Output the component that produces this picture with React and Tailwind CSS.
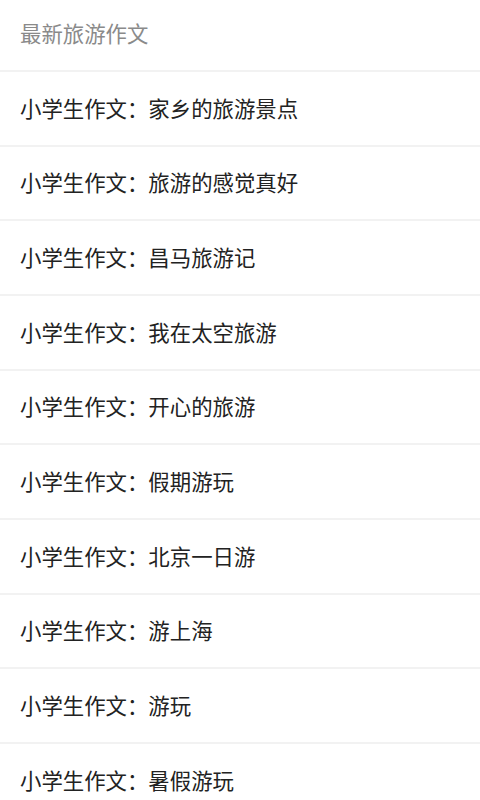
import React from 'react';

const titles = [
    '家乡的旅游景点',
    '旅游的感觉真好',
    '昌马旅游记',
    '我在太空旅游',
    '开心的旅游',
    '假期游玩',
    '北京一日游',
    '游上海',
    '游玩',
    '暑假游玩',
];

const App = () => {
    return (
        <div
            className="w-[480px] h-[800px] overflow-hidden bg-white"
            style={{ fontFamily: '"Noto Sans CJK SC", "Noto Sans", sans-serif' }}
        >
            {/* Header */}
            <div className="h-[72px] flex items-center px-5 border-b-2 border-[#f2f2f2]">
                <span className="text-[21.4px] text-[#8a8a8a] -mt-[4px]">最新旅游作文</span>
            </div>

            {/* List */}
            <div className="flex flex-col">
                {titles.map((t, i) => (
                    <div
                        key={i}
                        className="h-[74.67px] shrink-0 flex items-center px-5 border-b-2 border-[#f2f2f2]"
                    >
                        <span className="text-[21.4px] text-[#222222] -mt-[1px]">小学生作文：{t}</span>
                    </div>
                ))}
            </div>
        </div>
    );
};

export default App;
